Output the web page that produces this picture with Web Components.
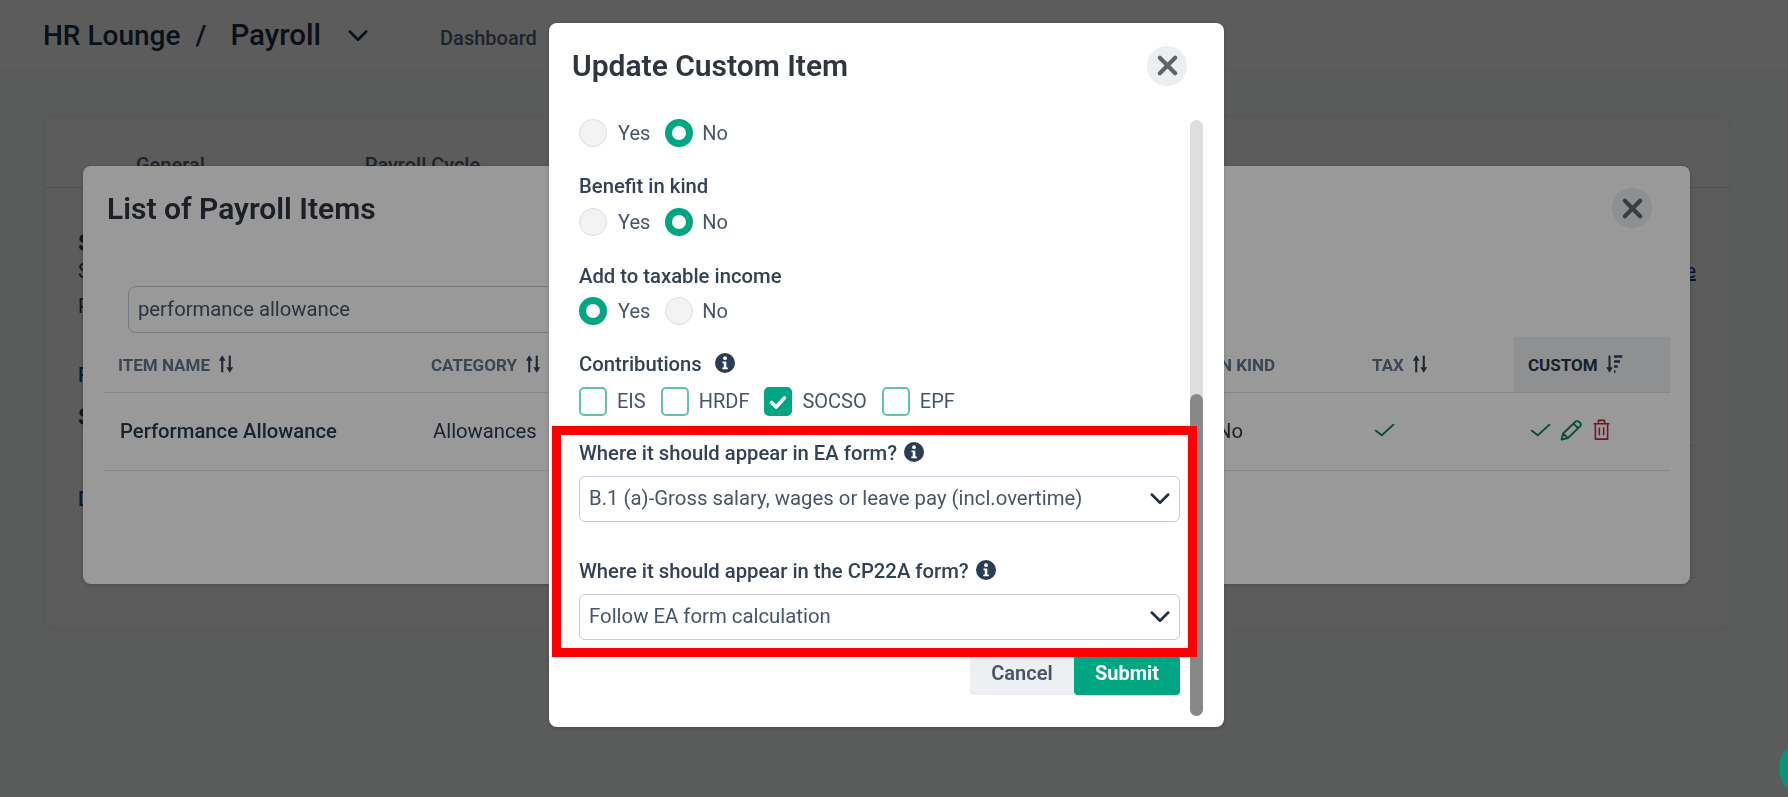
<!DOCTYPE html>
<html lang="en">
<head>
<meta charset="utf-8">
<title>Update Custom Item</title>
<style>
    html, body { margin: 0; height: 100%; overflow: hidden; }
    body { background: #fafffd; color: #2f3e55; font-family: Roboto, "Liberation Sans", sans-serif; }
</style>
</head>
<body>

<top-bar></top-bar>
<settings-card></settings-card>

<modal-window variant="list" heading="List of Payroll Items">
    <search-box value="performance allowance"></search-box>
    <payroll-table></payroll-table>
</modal-window>

<modal-window variant="form" heading="Update Custom Item">
    <custom-item-form></custom-item-form>
</modal-window>

<chat-bubble></chat-bubble>

<script>
const ICONS = {
    chevron: '<path d="M3 6l9 9 9-9" fill="none" stroke="currentColor" stroke-width="2.8" stroke-linecap="round" stroke-linejoin="round"/>',
    close: '<path d="M4 4l16 16M20 4L4 20" fill="none" stroke="currentColor" stroke-width="4.4" stroke-linecap="round"/>',
    info: '<circle cx="12" cy="12" r="12" fill="currentColor"/><circle cx="12" cy="6.2" r="2.3" fill="#fff"/><path d="M9 10.2h4.6v7.2H15.4v2.2H8.8v-2.2h1.7v-5H9z" fill="#fff"/>',
    check: '<path d="M2 13l7 7L22 4" fill="none" stroke="currentColor" stroke-width="2.4" stroke-linecap="round" stroke-linejoin="round"/>',
    tick: '<path d="M5 12.5l5 5L19 7.5" fill="none" stroke="currentColor" stroke-width="4" stroke-linecap="round" stroke-linejoin="round"/>',
    pencil: '<path d="M2.5 21.5l1.4-6L15.6 3.8a2.6 2.6 0 0 1 3.7 0l.9.9a2.6 2.6 0 0 1 0 3.7L8.500 20.100zM13.800 5.600l4.600 4.600M3.900 15.500l4.600 4.600" fill="none" stroke="currentColor" stroke-width="1.800" stroke-linejoin="round"/>',
    trash: '<path d="M3 6h18M8.500 6V2.500h7V6M5 6v16h14V6M9.500 10v8M14.500 10v8" fill="none" stroke="currentColor" stroke-width="1.800" stroke-linejoin="round"/>',
    sort: '<path d="M7 22V5" stroke="currentColor" stroke-width="2.800"/><path d="M2.500 8L7 1.500 11.500 8z" fill="currentColor"/><path d="M17 2v17" stroke="currentColor" stroke-width="2.800"/><path d="M12.500 16L17 22.500 21.500 16z" fill="currentColor"/>',
    sorted: '<path d="M6 2v17" stroke="currentColor" stroke-width="2.800"/><path d="M1.500 16L6 22.500 10.500 16z" fill="currentColor"/><path d="M12 3h11M12 9h8M12 15h5M12 21h2" stroke="currentColor" stroke-width="2.800"/>'
};

class UiIcon extends HTMLElement {
    connectedCallback() {
        let w = this.getAttribute('w') || 24;
        let h = this.getAttribute('h') || w;
        this.attachShadow({ mode: 'open' }).innerHTML = `
        <style>
            :host { display: inline-flex; flex: none; width: ${w}px; height: ${h}px; }
            svg { width: 100%; height: 100%; display: block; }
        </style>
        <svg viewBox="0 0 24 24" preserveAspectRatio="none">${ICONS[this.getAttribute('name')]}</svg>`;
    }
}

class TopBar extends HTMLElement {
    connectedCallback() {
        this.attachShadow({ mode: 'open' }).innerHTML = `
        <style>
            :host { display: flex; align-items: center; height: 70px; padding-left: 43px; border-bottom: 1px solid #f2f5f4; color: #1f3047; background: #fff; }
            .crumb { font-size: 28px; font-weight: 500; }
            .page { font-size: 29.500px; font-weight: 500; }
            .slash { margin: 0 24px 0 15px; font-size: 28px; font-weight: 500; }
            ui-icon { margin: 4px 0 0 26px; }
            .nav { margin-left: 71px; padding-top: 6px; font-size: 20px; font-weight: 500; color: #566377; }
        </style>
        <span class="crumb">HR Lounge</span><span class="slash">/</span><span class="page">Payroll</span>
        <ui-icon name="chevron" w="22" h="22"></ui-icon>
        <span class="nav">Dashboard</span>`;
    }
}

class SettingsCard extends HTMLElement {
    connectedCallback() {
        this.attachShadow({ mode: 'open' }).innerHTML = `
        <style>
            :host { display: block; box-sizing: border-box; width: 1686px; height: 513px; margin: 45px 0 0 44px; background: #fff; border: 1px solid #f0f2f2; border-radius: 8px; }
            .tabs { display: flex; height: 70px; padding-left: 91px; gap: 160px; border-bottom: 1px solid #dfe5e3; }
            .tabs span { margin-top: 36px; font-size: 20px; line-height: 24px; font-weight: 500; color: #566377; }
            .body { padding: 0 33px; }
            .row { display: flex; justify-content: space-between; font-size: 20px; line-height: 24px; }
            .bold { font-weight: 700; font-size: 24px; }
            .blue { color: #1d4e89; font-weight: 500; }
            a { color: #1d2f8a; text-decoration: underline; }
            .line { border-bottom: 1px solid #e4e7e6; }
        </style>
        <div class="tabs"><span>General</span><span>Payroll Cycle</span></div>
        <div class="body">
            <div class="row bold" style="margin-top:43px">S</div>
            <div class="row" style="margin-top:4px"><span>S</span><a>e</a></div>
            <div class="row" style="margin-top:11px">P</div>
            <div class="row blue" style="margin-top:45px">F</div>
            <div class="row bold" style="margin-top:18px">S</div>
            <div class="line" style="margin-top:16px"></div>
            <div class="row blue" style="margin-top:41px">D</div>
            <div class="line" style="margin-top:66px"></div>
        </div>`;
    }
}

// scrim + centred dialog, both variants share the same chrome
class ModalWindow extends HTMLElement {
    connectedCallback() {
        let form = this.getAttribute('variant') == 'form';
        this.attachShadow({ mode: 'open' }).innerHTML = `
        <style>
            :host { position: fixed; inset: 0; display: flex; justify-content: center; align-items: flex-start; padding-right: 15px; background: rgba(0,0,0,.4); }
            .dialog { box-sizing: border-box; display: flex; flex-direction: column; background: #fff; border-radius: 8px; box-shadow: 0 1px 4px rgba(0,0,0,.2);
                width: ${form ? 675 : 1607}px; height: ${form ? 704 : 418}px; margin-top: ${form ? 23 : 166}px; }
            header { flex: none; display: flex; justify-content: space-between; align-items: center; height: ${form ? 85 : 84}px; padding: ${form ? '0 37px 0 23px' : '0 38px 0 24px'}; }
            h2 { margin: 0; font-size: 30px; font-weight: 600; color: #2f3640; }
            .close { width: 40px; height: 40px; border-radius: 50%; background: #eceef0; color: #5d6664; display: flex; align-items: center; justify-content: center; }
        </style>
        <div class="dialog">
            <header>
                <h2>${this.getAttribute('heading')}</h2>
                <div class="close"><ui-icon name="close" w="23" h="23"></ui-icon></div>
            </header>
            <slot></slot>
        </div>`;
    }
}

class SearchBox extends HTMLElement {
    connectedCallback() {
        this.attachShadow({ mode: 'open' }).innerHTML = `
        <style>
            :host { display: flex; align-items: center; box-sizing: border-box; width: 900px; height: 47px; margin: 36px 0 0 45px; padding: 0 0 1px 9px; border: 1px solid #c5cdd8; border-radius: 8px; font-size: 20.250px; color: #475569; }
        </style>
        ${this.getAttribute('value')}`;
    }
}

class PayrollTable extends HTMLElement {
    connectedCallback() {
        this.attachShadow({ mode: 'open' }).innerHTML = `
        <style>
            :host { display: grid; grid-template-columns: 313px 784px 157px 156px 155.500px; margin: 4px 0 0 21px; width: 1565.500px; font-size: 20.250px; color: #2b3a4f; }
            .th { display: flex; align-items: center; gap: 7px; height: 55px; padding-left: 14px; border-bottom: 1px solid #dfe3e8; font-size: 17px; font-weight: 700; color: #64748b; }
            .th:first-child { padding-left: 13px; gap: 8px; }
            .th span { padding-top: 1px; }
            .th ui-icon { color: #334155; margin-top: -2px; }
            .sorted { background: #eef0f3; color: #273549; }
            .td { display: flex; align-items: center; gap: 7.500px; height: 78px; padding: 0 0 1px 16px; box-sizing: border-box; border-bottom: 1px solid #dfe3e8; }
            .td ui-icon { margin-top: -3px; }
            .strong { font-weight: 500; }
            .ok { color: #0a7f5f; }
        </style>
        <div class="th"><span>ITEM NAME</span><ui-icon name="sort" w="18" h="20"></ui-icon></div>
        <div class="th"><span>CATEGORY</span><ui-icon name="sort" w="18" h="20"></ui-icon></div>
        <div class="th"><span>IN KIND</span></div>
        <div class="th"><span>TAX</span><ui-icon name="sort" w="18" h="20"></ui-icon></div>
        <div class="th sorted"><span>CUSTOM</span><ui-icon name="sorted" w="18" h="20"></ui-icon></div>
        <div class="td strong">Performance Allowance</div>
        <div class="td">Allowances</div>
        <div class="td">No</div>
        <div class="td ok"><ui-icon name="check" w="21" h="16"></ui-icon></div>
        <div class="td">
            <ui-icon class="ok" name="check" w="21" h="16"></ui-icon>
            <ui-icon class="ok" name="pencil" w="25" h="24"></ui-icon>
            <ui-icon name="trash" w="21" h="23" style="color:#c2223f"></ui-icon>
        </div>`;
    }
}

class RadioOption extends HTMLElement {
    connectedCallback() {
        this.attachShadow({ mode: 'open' }).innerHTML = `
        <style>
            :host { display: inline-flex; align-items: center; gap: var(--label-gap, 11px); height: 28px; font-size: 20px; color: #475569; }
            i { box-sizing: border-box; width: 28px; height: 28px; border-radius: 50%; background: #f3f3f3; border: 1px solid #dedede; }
            i.on { background: #fff; border: 7.500px solid #00a582; }
        </style>
        <i class="${this.hasAttribute('checked') ? 'on' : ''}"></i><span><slot></slot></span>`;
    }
}

class CheckOption extends HTMLElement {
    connectedCallback() {
        let on = this.hasAttribute('checked');
        this.attachShadow({ mode: 'open' }).innerHTML = `
        <style>
            :host { display: inline-flex; align-items: center; gap: 10px; height: 29px; font-size: 20px; color: #475569; }
            i { box-sizing: border-box; display: flex; align-items: center; justify-content: center; width: 28px; height: 29px; border-radius: 5px; background: #fff; border: 2px solid #62c3ad; color: #fff; }
            i.on { background: #00a582; border-color: #00a582; }
            span { padding-bottom: 1px; }
        </style>
        <i class="${on ? 'on' : ''}">${on ? '<ui-icon name="tick" w="22" h="22"></ui-icon>' : ''}</i><span><slot></slot></span>`;
    }
}

class SelectField extends HTMLElement {
    connectedCallback() {
        this.attachShadow({ mode: 'open' }).innerHTML = `
        <style>
            :host { display: flex; align-items: center; justify-content: space-between; box-sizing: border-box; height: 46px; padding: 0 8px 0 9px; border: 1px solid #c5cdd8; border-radius: 6px; font-size: 20.350px; color: #475569; }
            span { padding-bottom: 3px; }
            ui-icon { color: #1f3047; margin-top: 2px; }
        </style>
        <span><slot></slot></span><ui-icon name="chevron" w="22" h="22"></ui-icon>`;
    }
}

class CustomItemForm extends HTMLElement {
    connectedCallback() {
        this.attachShadow({ mode: 'open' }).innerHTML = `
        <style>
            :host { display: flex; height: 596px; margin-top: 12px; padding: 0 21px 0 30px; gap: 10px; color: #334155; }
            .fields { width: 601px; }
            .label { display: flex; align-items: center; height: 24px; font-size: 20.250px; font-weight: 500; color: #334155; }
            .label ui-icon { color: #2b3c55; margin: -3px 0 0 7px; }
            .row { display: flex; gap: 13px; }
            .row radio-option + radio-option { margin-left: 2px; --label-gap: 9px; }
            .boxes { gap: 15px; }
            .highlighted { position: relative; margin-top: 25px; }
            .red { position: absolute; top: -15px; right: -17px; bottom: -17px; left: -27px; border: 9px solid #f00; z-index: 2; }
            .buttons { display: flex; justify-content: flex-end; margin-top: 15px; }
            button { font: inherit; font-size: 20px; font-weight: 700; height: 40px; border: 0; padding: 0 0 5px; border-radius: 4px; }
            .cancel { width: 104px; background: #edeff3; color: #475569; font-weight: 600; border-radius: 4px 0 0 4px; }
            .submit { width: 106px; background: #00a582; color: #fff; }
            .track { flex: none; width: 13px; height: 596px; border-radius: 7px; background: #dedede; display: flex; }
            .thumb { width: 13px; height: 322px; margin-top: 274px; border-radius: 7px; background: #888; }
        </style>
        <div class="fields">
            <div class="row" style="margin-top:-1px">
                <radio-option>Yes</radio-option><radio-option checked>No</radio-option>
            </div>
            <div class="label" style="margin-top:27px">Benefit in kind</div>
            <div class="row" style="margin-top:10px">
                <radio-option>Yes</radio-option><radio-option checked>No</radio-option>
            </div>
            <div class="label" style="margin-top:28px">Add to taxable income</div>
            <div class="row" style="margin-top:9px">
                <radio-option checked>Yes</radio-option><radio-option>No</radio-option>
            </div>
            <div class="label" style="margin-top:27px">Contributions<ui-icon name="info" w="20" h="20" style="margin-left:13px"></ui-icon></div>
            <div class="row boxes" style="margin-top:11px">
                <check-option>EIS</check-option><check-option>HRDF</check-option><check-option checked>SOCSO</check-option><check-option>EPF</check-option>
            </div>
            <div class="highlighted">
                <div class="label">Where it should appear in EA form?<ui-icon name="info" w="20" h="20"></ui-icon></div>
                <select-field style="margin-top:11px">B.1 (a)-Gross salary, wages or leave pay (incl.overtime)</select-field>
                <div class="label" style="margin-top:37px">Where it should appear in the CP22A form?<ui-icon name="info" w="20" h="20"></ui-icon></div>
                <select-field style="margin-top:11px">Follow EA form calculation</select-field>
                <div class="red"></div>
            </div>
            <div class="buttons">
                <button class="cancel">Cancel</button><button class="submit">Submit</button>
            </div>
        </div>
        <div class="track"><div class="thumb"></div></div>`;
    }
}

class ChatBubble extends HTMLElement {
    connectedCallback() {
        this.attachShadow({ mode: 'open' }).innerHTML = `
        <style>
            :host { position: fixed; right: -51px; bottom: -1px; width: 60px; height: 60px; border-radius: 50%; background: #0b9277; }
        </style>`;
    }
}

customElements.define('ui-icon', UiIcon);
customElements.define('top-bar', TopBar);
customElements.define('settings-card', SettingsCard);
customElements.define('modal-window', ModalWindow);
customElements.define('search-box', SearchBox);
customElements.define('payroll-table', PayrollTable);
customElements.define('radio-option', RadioOption);
customElements.define('check-option', CheckOption);
customElements.define('select-field', SelectField);
customElements.define('custom-item-form', CustomItemForm);
customElements.define('chat-bubble', ChatBubble);
</script>
</body>
</html>
